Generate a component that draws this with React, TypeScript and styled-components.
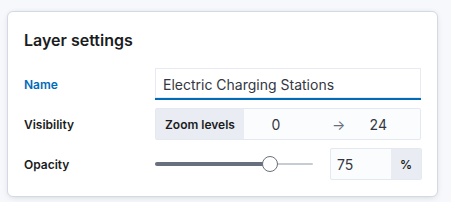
import React, { useState } from "react";
import styled, { createGlobalStyle } from "styled-components";

const GlobalStyle = createGlobalStyle`
  html, body {
    margin: 0;
    padding: 0;
    background: #f7f8fc;
    font-family: Inter, "Noto Sans", sans-serif;
    color: #343741;
  }
`;

const Page = styled.div`
  padding: 11px 13px 8px 7px;
`;

const Panel = styled.div`
  width: 397px;
  padding: 16px;
  background: #ffffff;
  border: 1px solid #d3dae6;
  border-radius: 6px;
  box-shadow: 0 0.9px 4px -1px rgba(0, 0, 0, 0.08),
    0 2.6px 8px -1px rgba(0, 0, 0, 0.06);
`;

const Title = styled.h2`
  margin: 0 0 16px;
  font-size: 16px;
  line-height: 24px;
  font-weight: 600;
  color: #1a1c21;
`;

const Form = styled.div`
  display: flex;
  flex-direction: column;
  gap: 8px;
`;

const Row = styled.div`
  display: grid;
  grid-template-columns: 131px 1fr;
  align-items: center;
  height: 32px;
`;

const Label = styled.label<{ $active?: boolean }>`
  font-size: 12px;
  font-weight: 600;
  color: ${(p) => (p.$active ? "#006bb8" : "#1a1c21")};
`;

const TextInput = styled.input`
  box-sizing: border-box;
  width: 100%;
  height: 32px;
  padding: 2px 8px 0;
  font: inherit;
  font-size: 14px;
  color: #343741;
  background: #ffffff;
  border: none;
  border-radius: 0;
  box-shadow: inset 0 0 0 1px rgba(17, 42, 134, 0.1);
  border-bottom: 2px solid #006bb8;
  outline: none;
`;

const Group = styled.div`
  box-sizing: border-box;
  display: flex;
  align-items: stretch;
  height: 32px;
  background: #fbfcfd;
  border: 1px solid #e4e8ef;
  border-radius: 2px;
  overflow: hidden;
`;

const Addon = styled.div<{ $pad?: number }>`
  display: flex;
  align-items: center;
  padding: 0 ${(p) => p.$pad ?? 9}px;
  background: #e9edf3;
  font-size: 12px;
  font-weight: 600;
  color: #1a1c21;
`;

const NumberField = styled.input<{ $width?: number }>`
  width: ${(p) => (p.$width ? `${p.$width}px` : "auto")};
  flex: ${(p) => (p.$width ? "none" : "1")};
  min-width: 0;
  padding: 0;
  border: none;
  background: transparent;
  font: inherit;
  font-size: 14px;
  color: #343741;
  text-align: center;
  outline: none;
`;

const PercentField = styled(NumberField)`
  text-align: left;
  padding-left: 6px;
`;

const Arrow = styled.span`
  display: flex;
  align-items: center;
  padding: 0 1px 0 24px;
  color: #69707d;
  font-size: 14px;
`;

const OpacityControls = styled.div`
  display: flex;
  align-items: center;
  gap: 17px;
`;

const Slider = styled.div`
  position: relative;
  width: 158px;
  height: 16px;
  display: flex;
  align-items: center;
`;

const Track = styled.div`
  width: 100%;
  height: 2px;
  background: #c7ccd4;
  border-radius: 2px;
`;

const Fill = styled.div`
  position: absolute;
  left: 0;
  top: 6px;
  height: 4px;
  background: #69707d;
  border-radius: 2px;
`;

const Thumb = styled.div`
  position: absolute;
  top: 0;
  box-sizing: border-box;
  width: 16px;
  height: 16px;
  border-radius: 50%;
  background: #ffffff;
  border: 1.5px solid #69707d;
`;

const PercentGroup = styled(Group)`
  width: 92px;
`;

export default function App() {
  const [name, setName] = useState("Electric Charging Stations");
  const [minZoom, setMinZoom] = useState("0");
  const [maxZoom, setMaxZoom] = useState("24");
  const [opacity, setOpacity] = useState("75");

  const value = Math.max(0, Math.min(100, Number(opacity) || 0));
  const thumbLeft = (value / 100) * (158 - 16);

  return (
    <Page>
      <GlobalStyle />
      <Panel>
        <Title>Layer settings</Title>
        <Form>
          <Row>
            <Label $active>Name</Label>
            <TextInput value={name} onChange={(e) => setName(e.target.value)} />
          </Row>
          <Row>
            <Label>Visibility</Label>
            <Group>
              <Addon>Zoom levels</Addon>
              <NumberField
                $width={64}
                value={minZoom}
                onChange={(e) => setMinZoom(e.target.value)}
              />
              <Arrow>→</Arrow>
              <NumberField
                $width={64}
                value={maxZoom}
                onChange={(e) => setMaxZoom(e.target.value)}
              />
            </Group>
          </Row>
          <Row>
            <Label>Opacity</Label>
            <OpacityControls>
              <Slider>
                <Track />
                <Fill style={{ width: thumbLeft + 8 }} />
                <Thumb style={{ left: thumbLeft }} />
              </Slider>
              <PercentGroup>
                <PercentField
                  value={opacity}
                  onChange={(e) => setOpacity(e.target.value)}
                />
                <Addon $pad={9}>%</Addon>
              </PercentGroup>
            </OpacityControls>
          </Row>
        </Form>
      </Panel>
    </Page>
  );
}
